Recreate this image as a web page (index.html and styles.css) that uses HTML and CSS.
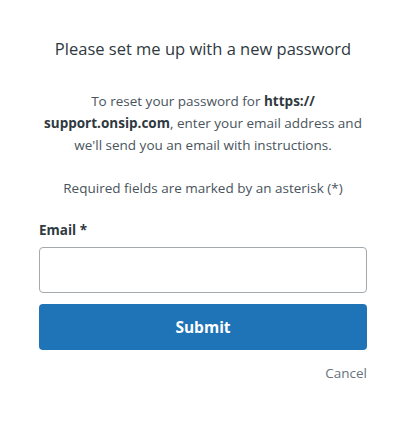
FILE: index.html
```html
<!doctype html>
<html>
<head>
<title>Reset password</title>
<link rel="stylesheet" href="styles.css">
</head>
<body>
<div class="page">
	<h1 class="title">Please set me up with a new password</h1>
	<p class="intro">To reset your password for <b>https://<br>support.onsip.com</b>, enter your email address and we'll send you an email with instructions.</p>
	<p class="required">Required fields are marked by an asterisk (*)</p>
	<form class="form">
		<label class="label" for="email">Email *</label>
		<input type="email" id="email" class="input">
		<button type="button" class="submit">Submit</button>
		<div class="actions"><a class="cancel" href="#">Cancel</a></div>
	</form>
</div>
</body>
</html>
```

FILE: styles.css
```css
html,body {
	margin:0;
	background-color:#fff;
	color:#2f3941;
	font-family:"Open Sans","Noto Sans",sans-serif;
}
.page {
	width:328px;
	margin-left:39px;
	padding-top:37px;
	text-align:center;
}
.title {
	margin:0;
	font-size:16.5px;
	font-weight:normal;
	line-height:24px;
}
.intro {
	margin:29px 0 0;
	font-size:13.5px;
	line-height:22px;
	color:#49545c;
}
.intro b {
	color:#2f3941;
}
.required {
	margin:21px 0 0;
	font-size:13.5px;
	line-height:22px;
	color:#49545c;
}
.form {
	margin-top:21px;
	text-align:left;
	display:flex;
	flex-direction:column;
}
.label {
	font-size:13.5px;
	font-weight:bold;
	line-height:20px;
}
.input {
	margin-top:7px;
	height:46px;
	box-sizing:border-box;
	border:1px solid #a4a9ae;
	border-radius:4px;
	padding:0 12px;
	font-size:14px;
}
.submit {
	margin-top:11px;
	height:46px;
	border:none;
	border-radius:4px;
	background-color:#1f73b7;
	color:#fff;
	font-family:inherit;
	font-size:15.5px;
	font-weight:bold;
}
.actions {
	margin-top:11px;
	text-align:right;
}
.cancel {
	font-size:13.5px;
	color:#68737d;
	text-decoration:none;
}
```
